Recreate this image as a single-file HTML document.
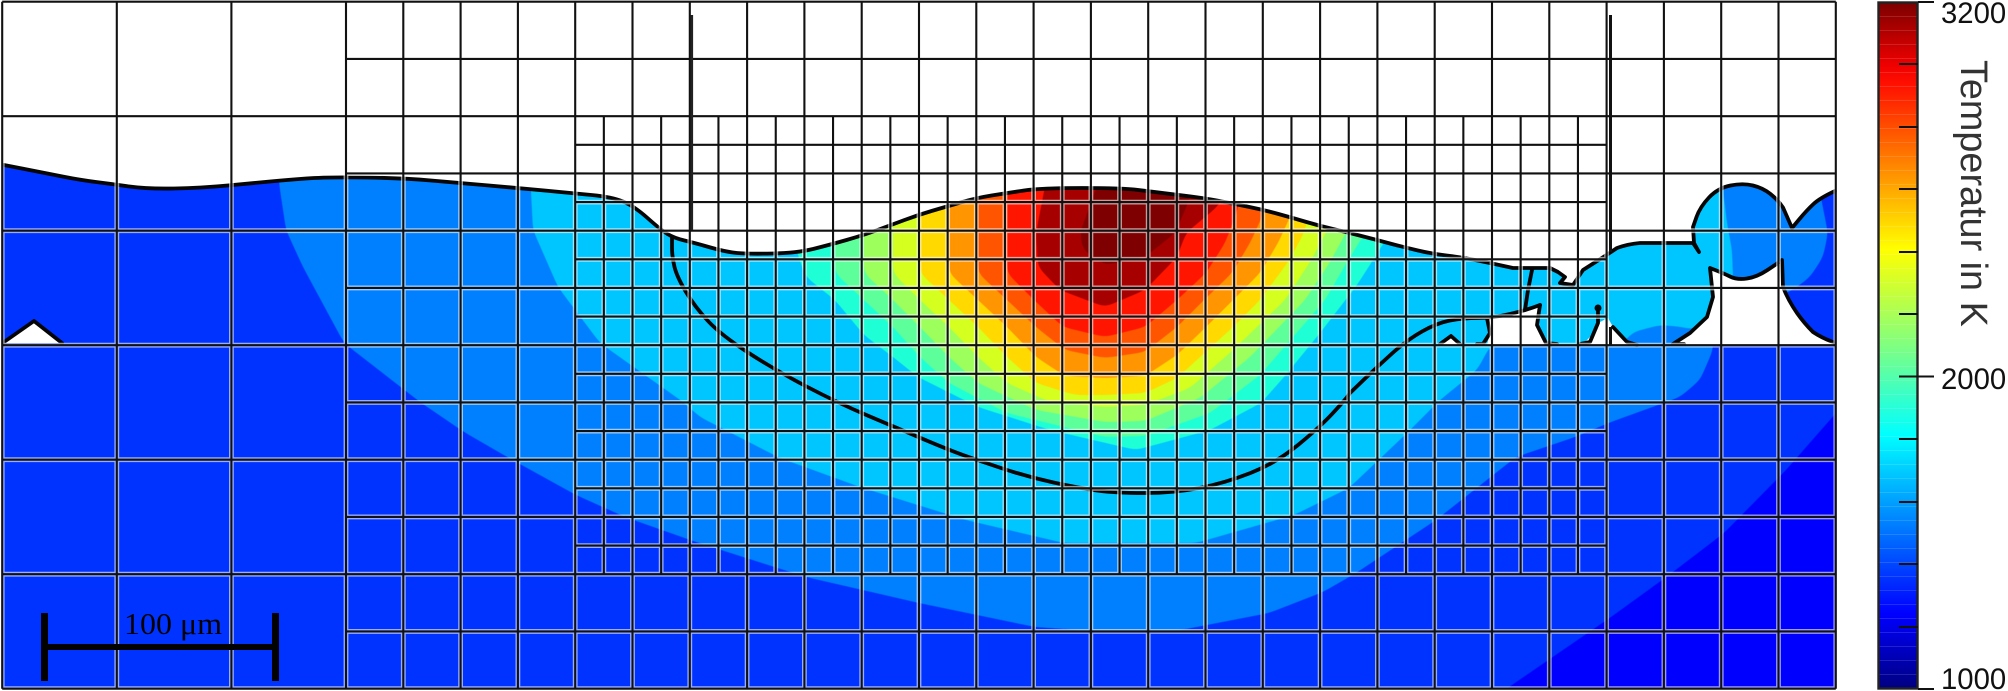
<!DOCTYPE html>
<html><head><meta charset="utf-8"><title>Temperatur</title>
<style>html,body{margin:0;padding:0;background:#fff;width:2008px;height:691px;overflow:hidden}svg{display:block}</style>
</head><body>
<svg xmlns="http://www.w3.org/2000/svg" width="2008" height="691" viewBox="0 0 2008 691">
<defs>
<linearGradient id="jet" x1="0" y1="2" x2="0" y2="689" gradientUnits="userSpaceOnUse">
<stop offset="0" stop-color="#7a0000"/><stop offset="0.093" stop-color="#f00000"/><stop offset="0.12" stop-color="#ff1000"/>
<stop offset="0.36" stop-color="#ffff00"/><stop offset="0.50" stop-color="#80ff80"/><stop offset="0.63" stop-color="#00ffff"/>
<stop offset="0.89" stop-color="#0000ff"/><stop offset="1" stop-color="#000080"/>
</linearGradient>
<pattern id="st" x="0" y="2" width="40" height="14" patternUnits="userSpaceOnUse"><rect x="0" y="0" width="40" height="1" fill="#fff" fill-opacity=".13"/></pattern>
<filter id="sm" filterUnits="userSpaceOnUse" x="-40" y="0" width="2100" height="760" color-interpolation-filters="sRGB">
<feGaussianBlur stdDeviation="5"/>
<feComponentTransfer><feFuncA type="linear" slope="10" intercept="-4.5"/></feComponentTransfer>
</filter>
<clipPath id="cl"><rect x="2" y="2" width="1834" height="687"/></clipPath>
<path id="g" d="M2.2 1.7H1835.8M2.2 116.2H1835.8M2.2 230.7H1835.8M2.2 345.2H1835.8M2.2 459.7H1835.8M2.2 574.2H1835.8M2.2 688.7H1835.8
M346 58.95H1835.8M346 173.45H1835.8M346 287.95H1835.8M346 402.45H1835.8M346 516.95H1835.8M346 631.45H1835.8
M575.2 144.8H1606.6M575.2 202.1H1606.6M575.2 259.3H1606.6M575.2 316.6H1606.6M575.2 373.8H1606.6M575.2 431.1H1606.6M575.2 488.3H1606.6M575.2 545.6H1606.6
M2.2 1.7V688.7M116.8 1.7V688.7M231.4 1.7V688.7M346 1.7V688.7M403.3 1.7V688.7M460.6 1.7V688.7M517.9 1.7V688.7M575.2 1.7V688.7M632.5 1.7V688.7M689.8 1.7V688.7M747.1 1.7V688.7M804.4 1.7V688.7M861.7 1.7V688.7M919 1.7V688.7M976.3 1.7V688.7M1033.6 1.7V688.7M1090.9 1.7V688.7M1148.2 1.7V688.7M1205.5 1.7V688.7M1262.8 1.7V688.7M1320.1 1.7V688.7M1377.4 1.7V688.7M1434.7 1.7V688.7M1492 1.7V688.7M1549.3 1.7V688.7M1606.6 1.7V688.7M1663.9 1.7V688.7M1721.2 1.7V688.7M1778.5 1.7V688.7M1835.8 1.7V688.7
M603.85 116.2V574.2M661.15 116.2V574.2M718.45 116.2V574.2M775.75 116.2V574.2M833.05 116.2V574.2M890.35 116.2V574.2M947.65 116.2V574.2M1004.95 116.2V574.2M1062.25 116.2V574.2M1119.55 116.2V574.2M1176.85 116.2V574.2M1234.15 116.2V574.2M1291.45 116.2V574.2M1348.75 116.2V574.2M1406.05 116.2V574.2M1463.35 116.2V574.2M1520.65 116.2V574.2M1577.95 116.2V574.2"/>
</defs>

<g clip-path="url(#cl)">
<rect x="2" y="2" width="1834" height="687" fill="#0033ff"/>
<polygon filter="url(#sm)" fill="#0000ff" points="1480,710 1509,687 1611,617 1669,575 1724,533 1786,470 1836,413 1870,375 1900,710"/>
<polygon filter="url(#sm)" fill="#0080ff" points="279,100 279,183 286,230 303,267 344,343 420,402 464,432 509,458 576,495 625,517 696,542 806,577 919,603 1035,627 1079,630 1181,630 1269,613 1323,592 1356,573 1436,520 1516,457 1575,437 1611,422 1680,397 1700,380 1713,350 1713,300 1783,295 1797,287 1810,277 1823,257 1828,233 1822,203 1805,100"/>
<polygon filter="url(#sm)" fill="#00c6ff" points="531,100 531,192 533,230 558,287 600,343 683,402 700,417 780,458 860,487 966,520 1064,543 1196,543 1294,515 1349,488 1407,433 1440,400 1477,370 1488,350 1490,345 1600,345 1623,343 1633,332 1660,325 1683,327 1693,330 1733,300 1733,277 1732,250 1727,223 1723,190 1723,100"/>

<polygon filter="url(#sm)" fill="#1fffd5" points="790,150 797,253 806,277 835,300 864,335 893,357 918,377 978,407 1050,430 1136,450 1210,430 1261,403 1284,377 1320,333 1357,285 1373,260 1395,225 1420,150"/>
<polygon filter="url(#sm)" fill="#5dff9a" points="835,150 835,273 864,300 893,327 920,357 949,383 1007,413 1105,437 1145,436 1210,413 1260,375 1325,300 1350,257 1370,225 1395,150"/>
<polygon filter="url(#sm)" fill="#9cff5c" points="864,150 864,273 893,300 920,327 949,357 978,383 1036,410 1105,422 1145,421 1200,398 1250,357 1305,300 1330,262 1350,225 1375,150"/>
<polygon filter="url(#sm)" fill="#d4ff1f" points="893,150 893,273 920,300 949,327 978,357 1007,383 1050,402 1105,407 1145,405 1190,388 1233,350 1285,300 1310,262 1330,225 1355,150"/>
<polygon filter="url(#sm)" fill="#ffd900" points="920,150 920,273 949,300 978,327 1007,357 1036,383 1075,395 1105,395 1145,393 1177,378 1233,327 1260,300 1288,262 1303,235 1330,150"/>
<polygon filter="url(#sm)" fill="#ff9500" points="949,150 949,273 978,300 1007,327 1036,357 1065,376 1105,378 1145,376 1177,355 1206,327 1233,300 1260,273 1278,243 1290,217 1310,150"/>
<polygon filter="url(#sm)" fill="#ff5500" points="978,150 978,273 1007,300 1036,327 1065,350 1105,358 1145,352 1177,327 1204,300 1232,273 1250,243 1262,217 1280,150"/>
<polygon filter="url(#sm)" fill="#ff1500" points="1007,150 1007,273 1034,300 1063,327 1105,337 1145,327 1177,300 1206,273 1225,243 1235,217 1255,150"/>
<polygon filter="url(#sm)" fill="#a60000" points="1052,150 1036,233 1038,267 1060,290 1105,307 1145,290 1177,257 1186,233 1217,207 1255,150"/>
<polygon filter="url(#sm)" fill="#7f0000" points="1110,150 1080,233 1083,250 1105,265 1145,257 1175,233 1188,203 1205,150"/>
</g>

<!-- gas -->
<path fill="#fff" d="M2 1V165H4L24.5 169Q45 173 62.5 176.5Q80 180 96 182Q112 184 129.5 186.5Q147 189 174 188.5Q201 188 227.5 185.5Q254 183 270 181.5Q286 180 306 178.5Q326 177 364 177.5Q402 178 431 180.5Q460 183 489 185.5Q518 188 544.5 190.5Q571 193 591.5 195Q612 197 623 201.5Q634 206 647.5 218Q661 230 667.5 234Q674 238 684.5 240.5Q695 243 710.5 247.5Q726 252 737 253Q748 254 772.5 253.5Q797 253 813 249Q829 245 846.5 240Q864 235 877.5 230Q891 225 904.5 220Q918 215 931.5 211Q945 207 960.5 202.5Q976 198 991.5 195.5Q1007 193 1024 190.5Q1041 188 1082 188Q1123 188 1138.5 190Q1154 192 1179 195Q1204 198 1219.5 201Q1235 204 1249.5 207Q1264 210 1278.5 214Q1293 218 1306.5 222Q1320 226 1333 229Q1346 232 1361.5 236Q1377 240 1390 243.5Q1403 247 1418 250.5Q1433 254 1446.5 255.5Q1460 257 1475 260Q1490 263 1501.5 265.5L1513 268L1550 268L1558 272L1565 277L1560 283L1573 285L1583 270L1605 256L1617 248Q1628 244 1640 243L1693 243L1699 252L1694 243L1693 227L1696.5 217Q1700 207 1709 197.5Q1718 188 1730.5 185.5Q1743 183 1753 185.5Q1763 188 1770.5 194Q1778 200 1783 207.5L1792 228L1799.5 219Q1807 210 1813.5 204Q1820 198 1836 191V1Z"/>
<polygon fill="#fff" points="1710,268 1723,273 1737,280 1757,277 1778,263 1782,260 1783,287 1797,313 1813,332 1833,342 1833,345 1673,345 1690,333 1707,317 1713,297"/>
<polygon fill="#fff" points="1487,345 1490,333 1487,318 1493,318 1527,310 1540,305 1537,325 1546,345"/>
<polygon fill="#fff" points="1582,345 1597,330 1600,322 1608,318 1613,327 1627,342 1637,345"/>
<polygon fill="#fff" points="1440,345 1451,336 1460,345"/>
<polygon fill="#fff" points="4,343 4,342 34,321 62,343"/>

<!-- contours -->
<g fill="none" stroke="#050505" stroke-width="3.8" stroke-linejoin="round" stroke-linecap="round">
<path d="M4 165L24.5 169Q45 173 62.5 176.5Q80 180 96 182Q112 184 129.5 186.5Q147 189 174 188.5Q201 188 227.5 185.5Q254 183 270 181.5Q286 180 306 178.5Q326 177 364 177.5Q402 178 431 180.5Q460 183 489 185.5Q518 188 544.5 190.5Q571 193 591.5 195Q612 197 623 201.5Q634 206 647.5 218Q661 230 667.5 234Q674 238 684.5 240.5Q695 243 710.5 247.5Q726 252 737 253Q748 254 772.5 253.5Q797 253 813 249Q829 245 846.5 240Q864 235 877.5 230Q891 225 904.5 220Q918 215 931.5 211Q945 207 960.5 202.5Q976 198 991.5 195.5Q1007 193 1024 190.5Q1041 188 1082 188Q1123 188 1138.5 190Q1154 192 1179 195Q1204 198 1219.5 201Q1235 204 1249.5 207Q1264 210 1278.5 214Q1293 218 1306.5 222Q1320 226 1333 229Q1346 232 1361.5 236Q1377 240 1390 243.5Q1403 247 1418 250.5Q1433 254 1446.5 255.5Q1460 257 1475 260Q1490 263 1501.5 265.5L1513 268L1550 268L1558 272L1565 277L1560 283L1573 285L1583 270L1605 256L1617 248Q1628 244 1640 243L1693 243L1699 252L1694 243L1693 227L1696.5 217Q1700 207 1709 197.5Q1718 188 1730.5 185.5Q1743 183 1753 185.5Q1763 188 1770.5 194Q1778 200 1783 207.5L1792 228L1799.5 219Q1807 210 1813.5 204Q1820 198 1835 191"/>
<path d="M1778 263L1767.5 270Q1757 277 1747 278.5Q1737 280 1730 276.5Q1723 273 1710 268L1713 297L1707 317L1690 333L1673 344L1684 344"/>
<path d="M1782 260L1783 287Q1788 300 1797 313Q1804 323 1813 332Q1822 338 1833 342"/>
<path d="M672 238L672 247.5Q672 257 674.5 267Q677 277 686 292Q695 307 708 321Q721 335 748 352.5Q775 370 806.5 386.5Q838 403 867.5 415.5Q897 428 923 439Q949 450 963 455Q977 460 1002.5 468.5Q1028 477 1053.5 482.5Q1079 488 1097 490.5Q1115 493 1144.5 493Q1174 493 1199.5 488Q1225 483 1250.5 473Q1276 463 1298 445Q1320 427 1332.5 413.5Q1345 400 1347.5 396.5L1350 393L1363.5 380Q1377 367 1392 353.5Q1407 340 1422 331.5Q1437 323 1450 320.5Q1463 318 1478 318Q1493 318 1510 314Q1527 310 1540 305"/>
<polyline points="1532,270 1528,290 1525,310"/>
<polyline points="1487,318 1490,333 1483,344 1477,344"/>
<polyline points="1540,305 1537,325 1546,343 1557,344"/>
<polyline points="1580,344 1590,342 1598,323 1598,310"/>
<polyline points="1613,327 1627,342 1637,345"/>
<polyline points="1440,344 1451,336 1460,344"/>
<polyline points="4,342 34,321 62,343"/>
</g>
<circle cx="1598" cy="308" r="3.5" fill="#050505"/>

<!-- grid -->
<use href="#g" fill="none" stroke="#fff" stroke-opacity=".6" stroke-width="4.8"/>
<use href="#g" fill="none" stroke="#111" stroke-width="2.1"/>
<rect x="690.5" y="15" width="2.6" height="215" fill="#222"/>
<rect x="1609" y="15" width="3" height="237" fill="#111"/>
<rect x="1609" y="327" width="3" height="18" fill="#111"/>

<!-- scale bar -->
<rect x="41" y="613" width="7" height="68" fill="#020202"/>
<rect x="272" y="613" width="7" height="68" fill="#020202"/>
<rect x="44" y="644" width="232" height="6" fill="#020202"/>
<text x="124" y="634" font-family="'Liberation Serif',serif" font-size="31" fill="#020202" textLength="98" lengthAdjust="spacingAndGlyphs">100 μm</text>

<!-- colorbar -->
<rect x="1878.5" y="2.5" width="39" height="686" fill="url(#jet)"/>
<rect x="1878.5" y="2.5" width="39" height="686" fill="url(#st)" stroke="#222" stroke-width="2.4"/>
<path d="M1899 64H1918M1899 127H1918M1899 189H1918M1899 252H1918M1899 314H1918M1899 439H1918M1899 502H1918M1899 564H1918M1899 627H1918" stroke="#111" stroke-width="2" fill="none"/>
<path d="M1899 376.5H1934M1918 2H1934M1918 689H1934" stroke="#111" stroke-width="2" fill="none"/>
<g font-family="'Liberation Sans',sans-serif" font-size="29.3" fill="#111">
<text x="1941" y="23">3200</text>
<text x="1941" y="389">2000</text>
<text x="1941" y="689">1000</text>
</g>
<text transform="translate(1961,60) rotate(90)" font-family="'Liberation Sans',sans-serif" font-size="37.8" fill="#333">Temperatur in K</text>
</svg>
</body></html>
